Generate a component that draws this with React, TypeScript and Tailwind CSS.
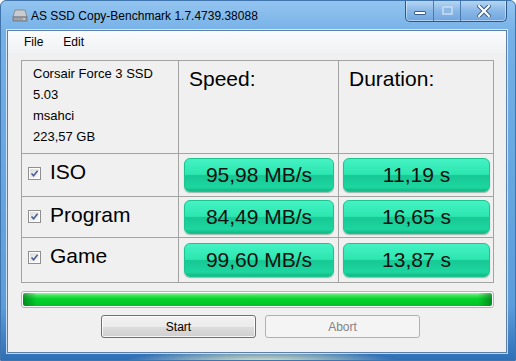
import React from 'react';

const ROWS = [
  { label: 'ISO', speed: '95,98 MB/s', duration: '11,19 s', h: 'h-[42px]' },
  { label: 'Program', speed: '84,49 MB/s', duration: '16,65 s', h: 'h-[40px]' },
  { label: 'Game', speed: '99,60 MB/s', duration: '13,87 s', h: 'h-[44px]' },
];

const FONT = "font-['Liberation_Sans',Arial,sans-serif]";

function DriveIcon() {
  return (
    <svg width="16" height="14" viewBox="0 0 16 14">
      <path d="M3 2 L13 2 L15 9 L1 9 Z" fill="#c8cbd0" stroke="#7d828a" strokeWidth="0.8" />
      <rect x="1" y="9" width="14" height="4" fill="#9ea3aa" stroke="#6b7078" strokeWidth="0.8" />
      <rect x="11" y="10.5" width="2" height="1" fill="#e6e8ea" />
    </svg>
  );
}

function CheckBox() {
  return (
    <div className="w-[13px] h-[13px] border border-[#8f8f8f] bg-white p-px mt-[3px] shrink-0">
      <div className="w-full h-full bg-gradient-to-br from-[#dcdcdc] to-[#fbfbfb] flex items-center justify-center">
        <svg width="9" height="9" viewBox="0 0 9 9">
          <path d="M1.5 4.5 L3.6 6.8 L7.6 1.8" fill="none" stroke="#4a5f97" strokeWidth="1.6" />
        </svg>
      </div>
    </div>
  );
}

function GreenBox({ text }: { text: string }) {
  return (
    <div className="flex-1 h-[34px] rounded-[6px] border border-[#1cc48f] bg-[linear-gradient(to_bottom,#45f2c4_0%,#2ce6af_48%,#17c894_52%,#1dd6a0_88%,#12b884_100%)] shadow-[0_1px_1px_rgba(0,80,50,0.35)] flex items-center justify-center text-[21px] text-[#111]">
      {text}
    </div>
  );
}

export default function App() {
  return (
    <div
      className={`w-[516px] h-[361px] overflow-hidden flex flex-col border border-[#3f74ad] rounded-t-[6px] ${FONT} bg-[radial-gradient(ellipse_140px_14px_at_260px_362px,rgba(255,250,190,0.95),rgba(255,250,190,0)),linear-gradient(to_bottom,#93c4ef_0%,#75b0e6_9%,#6aa8e2_40%,#5d9cda_85%,#2f6fb6_100%)]`}
    >
      {/* Title bar */}
      <div className="h-[29px] flex items-start shrink-0">
        <div className="ml-[11px] mt-[7px]">
          <DriveIcon />
        </div>
        <span className="ml-[3px] mt-[6px] text-[12px] text-black">
          AS SSD Copy-Benchmark 1.7.4739.38088
        </span>
        <div className="ml-auto mr-[8px] -mt-px flex h-[22px] border border-t-0 border-[#2f5888] rounded-b-[5px] overflow-hidden bg-gradient-to-b from-[#b9d8f4] via-[#8ab9e8] to-[#6fa5de] shadow-[inset_0_0_0_1px_rgba(255,255,255,0.45)]">
          <div className="w-[28px] border-r border-[#4d7bb0] flex items-center justify-center">
            <div className="w-[12px] h-[4px] mt-[5px] bg-white border border-[#3a5f8c] rounded-[1px]" />
          </div>
          <div className="w-[27px] border-r border-[#4d7bb0] flex items-center justify-center">
            <div className="w-[11px] h-[9px] border-2 border-[#c6dcf2] bg-[#8fb9e4] opacity-80" />
          </div>
          <div className="w-[45px] flex items-center justify-center">
            <svg width="14" height="12" viewBox="0 0 14 12">
              <path d="M2 1 L12 11 M12 1 L2 11" stroke="#34557c" strokeWidth="4" strokeLinecap="square" />
              <path d="M2 1 L12 11 M12 1 L2 11" stroke="#ffffff" strokeWidth="2.2" strokeLinecap="square" />
            </svg>
          </div>
        </div>
      </div>

      {/* Client area */}
      <div className="ml-[6px] w-[500px] h-[323px] border border-[#5b7fa6] shadow-[0_0_0_1px_rgba(255,255,255,0.7)] bg-[#f0f0f0] flex flex-col shrink-0">
        {/* Menu */}
        <div className="h-[22px] flex items-center gap-[20px] pl-[16px] text-[12px] text-black bg-gradient-to-b from-[#fafbfc] to-[#f1f2f4]">
          <span>File</span>
          <span>Edit</span>
        </div>

        {/* Body */}
        <div className="pl-[13px] pt-[7px] flex flex-col">
          <div className="w-[473px] bg-[#a3a3a3] p-px grid grid-cols-[156px_159px_154px] gap-px">
            <div className="h-[92px] bg-[#f0f0f0] pl-[11px] pt-[2px] text-[13px] leading-[21px] text-black flex flex-col">
              <span>Corsair Force 3 SSD</span>
              <span>5.03</span>
              <span>msahci</span>
              <span>223,57 GB</span>
            </div>
            <div className="h-[92px] bg-[#f0f0f0] pl-[10px] pt-[2px] text-[21px] text-black">Speed:</div>
            <div className="h-[92px] bg-[#f0f0f0] pl-[10px] pt-[2px] text-[21px] text-black">Duration:</div>

            {ROWS.map((r) => (
              <React.Fragment key={r.label}>
                <div className={`${r.h} bg-[#f0f0f0] flex items-start pl-[6px] pt-[6px]`}>
                  <div className="h-[24px] flex items-center gap-[9px]">
                    <CheckBox />
                    <span className="text-[21px] leading-[24px] text-black">{r.label}</span>
                  </div>
                </div>
                <div className={`${r.h} bg-[#f0f0f0] flex items-center pl-[5px] pr-[4px]`}>
                  <GreenBox text={r.speed} />
                </div>
                <div className={`${r.h} bg-[#f0f0f0] flex items-center pl-[4px] pr-[3px]`}>
                  <GreenBox text={r.duration} />
                </div>
              </React.Fragment>
            ))}
          </div>

          {/* Progress bar */}
          <div className="mt-[8px] w-[473px] h-[17px] border border-[#b4b4b4] rounded-[3px] bg-white p-px">
            <div className="w-full h-full rounded-[2px] bg-[linear-gradient(to_right,rgba(0,90,20,0.55)_0px,rgba(0,90,20,0)_14px,rgba(0,90,20,0)_calc(100%-14px),rgba(0,90,20,0.55)_100%),linear-gradient(to_bottom,#9af5a4_0%,#3ee356_20%,#04d22c_45%,#00c326_100%)]" />
          </div>

          {/* Buttons */}
          <div className="mt-[7px] ml-[80px] flex gap-[9px] text-[12px]">
            <div className="w-[155px] h-[23px] border border-[#707070] rounded-[3px] bg-[linear-gradient(to_bottom,#f2f2f2_0%,#ebebeb_50%,#dddddd_51%,#cfcfcf_100%)] shadow-[inset_0_0_0_1px_rgba(255,255,255,0.8)] flex items-center justify-center text-black">
              Start
            </div>
            <div className="w-[155px] h-[23px] border border-[#adb2b5] rounded-[3px] bg-[#f4f4f4] flex items-center justify-center text-[#838383]">
              Abort
            </div>
          </div>
        </div>
      </div>
    </div>
  );
}
